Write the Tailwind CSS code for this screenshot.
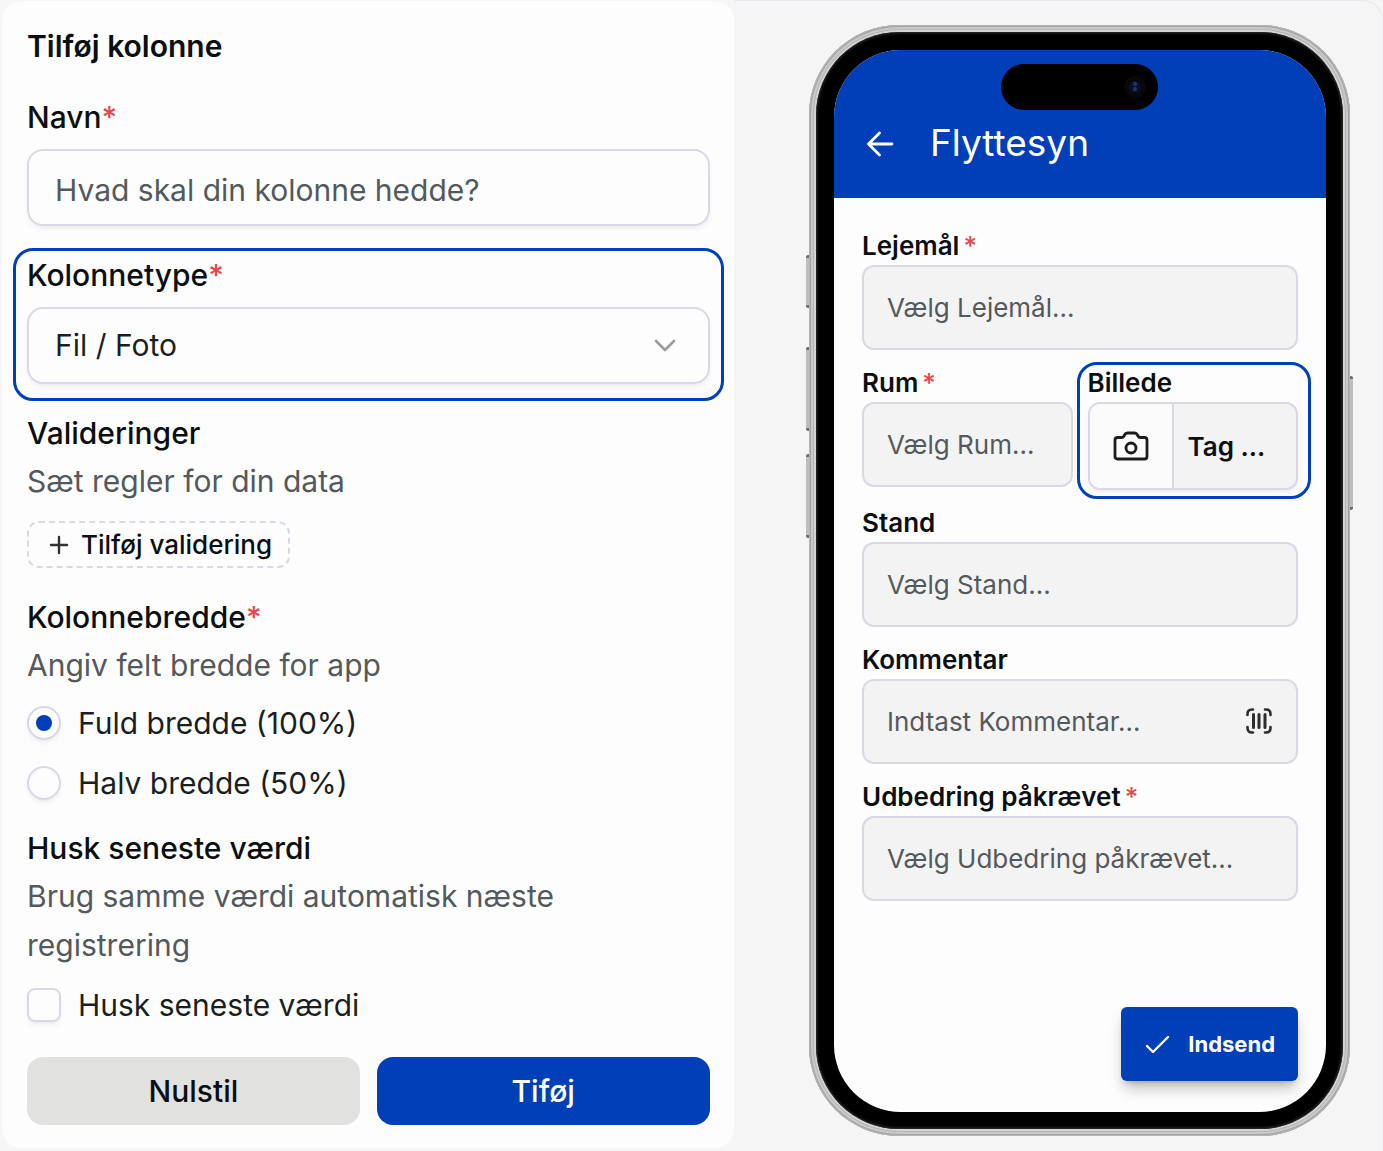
<!DOCTYPE html>
<html lang="da">

<head>
    <meta charset="UTF-8" />
    <meta name="viewport" content="width=device-width, initial-scale=1.0" />
    <title>Tilføj kolonne</title>
    <script src="https://cdn.jsdelivr.net/npm/@tailwindcss/browser@4"></script>
</head>

<body class="flex items-start bg-[#f6f6f6] font-[Inter,'Liberation_Sans',sans-serif] text-[#0b0f12]">

    <!-- Column editor -->
    <form class="mt-px ml-0.5 w-[52.9%] rounded-[20px] bg-[#fdfdfd] pt-[21px] pr-6 pb-[23px] pl-[25px] text-[30px]">
        <h1 class="font-semibold leading-[48px]">Tilføj kolonne</h1>

        <label for="name" class="mt-[23px] block font-medium leading-[48px]">Navn<span class="text-[#e5484d]">*</span></label>
        <input id="name" type="text" placeholder="Hvad skal din kolonne hedde?"
            class="mt-2 block h-[77px] w-full rounded-2xl border-2 border-[#d9d8e4] px-[26px] pt-1 shadow-md shadow-black/5 placeholder:text-[#53595c] focus:outline-none" />

        <!-- Highlighted field -->
        <div class="-mx-[14px] mt-[22px] rounded-[20px] border-[3px] border-[#003fb7] px-[11px] pb-[14px]">
            <label for="type" class="block font-medium leading-[48px]">Kolonnetype<span class="text-[#e5484d]">*</span></label>
            <div class="relative mt-2">
                <select id="type"
                    class="block h-[77px] w-full appearance-none rounded-2xl border-2 border-[#d9d8e4] px-[26px] text-[#1b1f22] shadow-md shadow-black/5 focus:outline-none">
                    <option>Fil / Foto</option>
                </select>
                <svg class="pointer-events-none absolute top-7 right-[33px] h-5 w-6" viewBox="0 0 24 20" fill="none"
                    stroke="#9b9b9b" stroke-width="2.6" stroke-linecap="round" stroke-linejoin="round">
                    <path d="M3 6l9 9 9-9" />
                </svg>
            </div>
        </div>

        <h2 class="mt-[9px] font-medium leading-[47px]">Valideringer</h2>
        <p class="leading-[48px] text-[#53595c]">Sæt regler for din data</p>
        <button type="button"
            class="mt-4 flex h-[47px] items-center gap-3 rounded-xl border-2 border-dashed border-[#d9d8e4] pr-4 pl-5 text-[26px] font-medium">
            <svg class="size-5" viewBox="0 0 20 20" fill="none" stroke="#333" stroke-width="2.4" stroke-linecap="round">
                <path d="M10 2v16M2 10h16" />
            </svg>
            Tilføj validering
        </button>

        <h2 class="mt-[26px] font-medium leading-[47px]">Kolonnebredde<span class="text-[#e5484d]">*</span></h2>
        <p class="leading-[48px] text-[#53595c]">Angiv felt bredde for app</p>
        <div class="mt-[17px] flex flex-col gap-[26px]">
            <label class="flex h-[34px] items-center gap-[17px] text-[#1b1f22]">
                <input type="radio" name="width" checked
                    class="grid size-[34px] appearance-none place-items-center rounded-full border-2 border-[#d9d8e4] shadow-md shadow-black/5 before:size-4 before:rounded-full before:content-[''] checked:before:bg-[#003fb7]" />
                Fuld bredde (100%)
            </label>
            <label class="flex h-[34px] items-center gap-[17px] text-[#1b1f22]">
                <input type="radio" name="width"
                    class="grid size-[34px] appearance-none place-items-center rounded-full border-2 border-[#d9d8e4] shadow-md shadow-black/5 before:size-4 before:rounded-full before:content-[''] checked:before:bg-[#003fb7]" />
                Halv bredde (50%)
            </label>
        </div>

        <h2 class="mt-[25px] font-medium leading-[47px]">Husk seneste værdi</h2>
        <p class="max-w-[560px] leading-[49px] text-[#53595c]">Brug samme værdi automatisk næste registrering</p>
        <label class="mt-[18px] flex h-[34px] items-center gap-[17px] text-[#1b1f22]">
            <input type="checkbox"
                class="size-[34px] appearance-none rounded-lg border-2 border-[#d9d8e4] shadow-md shadow-black/5 checked:bg-[#003fb7]" />
            Husk seneste værdi
        </label>

        <div class="mt-[35px] grid grid-cols-2 gap-[17px] font-medium">
            <button type="reset" class="h-[68px] rounded-2xl bg-[#e1e1df]">Nulstil</button>
            <button type="button" class="h-[68px] rounded-2xl bg-[#003fb7] text-white">Tiføj</button>
        </div>
    </form>

    <!-- App preview -->
    <section class="flex min-h-screen flex-1 justify-end rounded-tr-[20px] border-t border-r border-[#e9e9ef] bg-[#f5f5f5] pt-6 pr-8">
        <div class="relative h-[1111px] w-[541px] shrink-0 rounded-[90px] bg-[#d4d4d4] p-[7px] shadow-[inset_0_0_0_1px_#b5b5b5,inset_0_0_0_2px_#a3a3a3,inset_0_0_0_4px_#c9c9c9,inset_0_0_0_5px_#b4b4b4]">
            <!-- Side buttons -->
            <div class="absolute top-[230px] -left-[3px] h-[53px] w-[3px] rounded-l-xs border-y-3 border-[#6e6e6e] bg-[#bdbdbd]"></div>
            <div class="absolute top-[322px] -left-[3px] h-[84px] w-[3px] rounded-l-xs border-y-3 border-[#6e6e6e] bg-[#bdbdbd]"></div>
            <div class="absolute top-[429px] -left-[3px] h-[84px] w-[3px] rounded-l-xs border-y-3 border-[#6e6e6e] bg-[#bdbdbd]"></div>
            <div class="absolute top-[351px] -right-[3px] h-[134px] w-[3px] rounded-r-xs border-y-3 border-[#6e6e6e] bg-[#bdbdbd]"></div>

            <div class="h-full rounded-[83px] bg-black pt-[18px] pr-[17px] pb-[17px] pl-[18px] shadow-[inset_0_0_3px_1px_#333]">
                <div class="flex h-full flex-col overflow-hidden rounded-[67px] bg-[#fdfdfd]">
                    <header class="relative flex h-[148px] items-end gap-9 bg-[#003fb7] pb-[31px] pl-8 text-white">
                        <!-- Dynamic island -->
                        <div class="absolute top-[14px] left-[167px] flex h-[46px] w-[157px] items-center justify-end rounded-full bg-black pr-3">
                            <svg class="size-[22px]" viewBox="0 0 22 22">
                                <circle cx="11" cy="11" r="11" fill="#08080c" />
                                <circle cx="11" cy="11" r="6" fill="#0c0f2c" />
                                <circle cx="11" cy="8" r="2" fill="#26327c" />
                                <circle cx="11" cy="13" r="2" fill="#1c3a66" />
                            </svg>
                        </div>
                        <button type="button" aria-label="Tilbage" class="flex h-[46px] items-center">
                            <svg class="size-7" viewBox="0 0 28 28" fill="none" stroke="currentColor" stroke-width="2.8"
                                stroke-linecap="round" stroke-linejoin="round">
                                <path d="M26 14H2.500M13.500 3L2.500 14l11 11" />
                            </svg>
                        </button>
                        <h2 class="text-[37px] leading-[48px]">Flyttesyn</h2>
                    </header>

                    <form class="flex flex-1 flex-col gap-[18px] px-7 pt-[33px] pb-[31px] text-[26px]">
                        <div>
                            <label for="lejemaal" class="block font-semibold leading-[30px]">Lejemål<span class="ml-1 font-medium text-[#e5484d]">*</span></label>
                            <select id="lejemaal" class="mt-1 block h-[85px] w-full appearance-none rounded-xl border-2 border-[#d9d8e4] bg-[#f3f3f3] px-[23px] text-[#53595c]">
                                <option>Vælg Lejemål...</option>
                            </select>
                        </div>

                        <div class="grid grid-cols-2 gap-[15px]">
                            <div>
                                <label for="rum" class="block font-semibold leading-[30px]">Rum<span class="ml-1 font-medium text-[#e5484d]">*</span></label>
                                <select id="rum" class="mt-1 block h-[85px] w-full appearance-none rounded-xl border-2 border-[#d9d8e4] bg-[#f3f3f3] px-[23px] text-[#53595c]">
                                    <option>Vælg Rum...</option>
                                </select>
                            </div>
                            <div class="relative">
                                <div class="pointer-events-none absolute -top-1.5 -right-[13px] -bottom-[9px] -left-[11px] rounded-[20px] border-[3px] border-[#003fb7]"></div>
                                <label for="billede" class="block font-semibold leading-[30px]">Billede</label>
                                <button id="billede" type="button"
                                    class="mt-1 flex h-[88px] w-full overflow-hidden rounded-xl border-2 border-[#d9d8e4] bg-[#f3f3f3] font-semibold shadow-md shadow-black/5">
                                    <span class="flex h-full w-[84px] items-center justify-center border-r-2 border-[#d9d8e4] bg-[#fafafa]">
                                        <svg class="h-[30px] w-9" viewBox="0 0 36 30" fill="none" stroke="#1c1c1c" stroke-width="2.8" stroke-linejoin="round">
                                            <path d="M4 6.500H8.500Q10.200 6.500 11 5L11.500 4Q12.500 2 14.500 2H21.500Q23.500 2 24.500 4L25 5Q25.800 6.500 27.500 6.500H31.500Q34 6.500 34 9V25.500Q34 28 31.500 28H4.500Q2 28 2 25.500V9Q2 6.500 4.500 6.500" />
                                            <circle cx="18" cy="17" r="5" />
                                        </svg>
                                    </span>
                                    <span class="flex h-full items-center pl-[14px]">Tag ...</span>
                                </button>
                            </div>
                        </div>

                        <div>
                            <label for="stand" class="block font-semibold leading-[30px]">Stand</label>
                            <select id="stand" class="mt-1 block h-[85px] w-full appearance-none rounded-xl border-2 border-[#d9d8e4] bg-[#f3f3f3] px-[23px] text-[#53595c]">
                                <option>Vælg Stand...</option>
                            </select>
                        </div>

                        <div>
                            <label for="kommentar" class="block font-semibold leading-[30px]">Kommentar</label>
                            <div class="relative mt-1">
                                <input id="kommentar" type="text" placeholder="Indtast Kommentar..."
                                    class="block h-[85px] w-full rounded-xl border-2 border-[#d9d8e4] bg-[#f3f3f3] px-[23px] placeholder:text-[#53595c]" />
                                <svg class="absolute top-7 right-[25px] size-7" viewBox="0 0 28 28" fill="none" stroke="#2c2c2c" stroke-width="2.6" stroke-linecap="round">
                                    <path d="M8 2.500H7Q2.500 2.500 2.500 7V8M20 2.500h1Q25.500 2.500 25.500 7V8M8 25.500H7Q2.500 25.500 2.500 21V20M20 25.500h1Q25.500 25.500 25.500 21V20" />
                                    <path d="M8.500 7.500v13M14 7.500v13M20 7.500v13" stroke-width="3" />
                                </svg>
                            </div>
                        </div>

                        <div>
                            <label for="udbedring" class="block font-semibold leading-[30px]">Udbedring påkrævet<span class="ml-1 font-medium text-[#e5484d]">*</span></label>
                            <select id="udbedring" class="mt-1 block h-[85px] w-full appearance-none rounded-xl border-2 border-[#d9d8e4] bg-[#f3f3f3] px-[23px] text-[#53595c]">
                                <option>Vælg Udbedring påkrævet...</option>
                            </select>
                        </div>

                        <button type="button"
                            class="mt-auto flex h-[74px] items-center gap-[18px] self-end rounded-md bg-[#003fb7] px-[23px] text-[22px] font-bold text-white shadow-lg shadow-black/25">
                            <svg class="h-5 w-[26px]" viewBox="0 0 26 20" fill="none" stroke="currentColor" stroke-width="2.4" stroke-linecap="round" stroke-linejoin="round">
                                <path d="M3 12l6 6L24 3" />
                            </svg>
                            Indsend
                        </button>
                    </form>
                </div>
            </div>
        </div>
    </section>
</body>

</html>
